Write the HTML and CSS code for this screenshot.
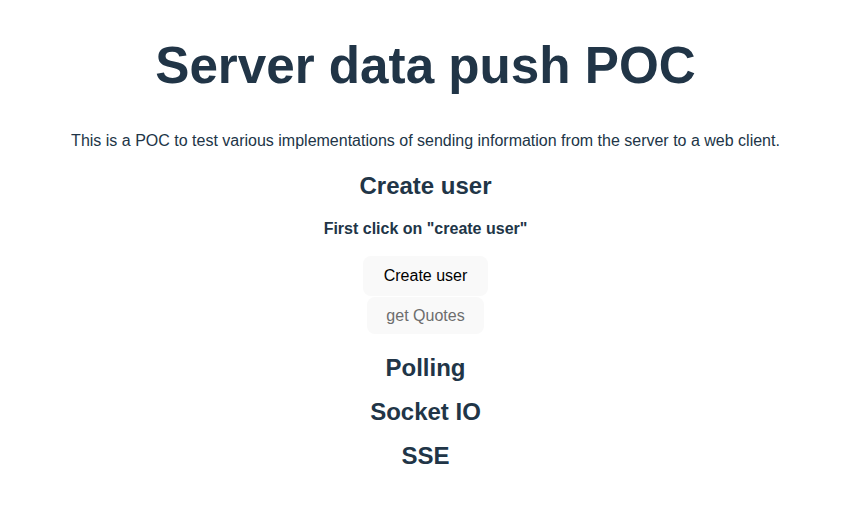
FILE: index.html
```html
<!DOCTYPE html>
<html>
<head>
<meta charset="utf-8">
<link rel="stylesheet" href="styles.css">
</head>
<body>
<div class="app">
  <h1 class="title">Server data push POC</h1>
  <p class="intro">This is a POC to test various implementations of sending information from the server to a web client.</p>
  <h2 class="section section-first">Create user</h2>
  <h4 class="hint">First click on "create user"</h4>
  <div class="actions">
    <button class="btn">Create user</button>
    <button class="btn btn-disabled" disabled>get Quotes</button>
  </div>
  <h2 class="section section-after">Polling</h2>
  <h2 class="section">Socket IO</h2>
  <h2 class="section">SSE</h2>
</div>
</body>
</html>
```
FILE: styles.css
```css
html, body {
  margin: 0;
  padding: 0;
  background: #ffffff;
}
.app {
  font-family: "Liberation Sans", Arial, Helvetica, sans-serif;
  color: #213547;
  text-align: center;
  padding: 38px 8px 0 0;
}
.title {
  font-size: 51.2px;
  line-height: 56px;
  font-weight: bold;
  margin: 0;
}
.intro {
  font-size: 16px;
  line-height: 18px;
  margin: 38px 0 0;
}
.section {
  font-size: 24px;
  line-height: 28px;
  font-weight: bold;
  margin: 16px 0 0;
}
.section-first {
  margin-top: 22px;
}
.section-after {
  margin-top: 20px;
}
.hint {
  font-size: 16px;
  line-height: 18px;
  font-weight: bold;
  margin: 20px 0 0;
}
.actions {
  display: flex;
  flex-direction: column;
  align-items: center;
  gap: 1px;
  margin-top: 18px;
}
.btn {
  font-family: "Liberation Sans", Arial, Helvetica, sans-serif;
  font-size: 16px;
  line-height: 18px;
  color: #000000;
  background: #f9f9f9;
  border: 1px solid transparent;
  border-radius: 8px;
  padding: 10px 20px;
  white-space: nowrap;
  cursor: pointer;
}
.btn-disabled {
  color: #6d6d6d;
  line-height: 19px;
  padding: 8px 18px;
  cursor: default;
}
```
